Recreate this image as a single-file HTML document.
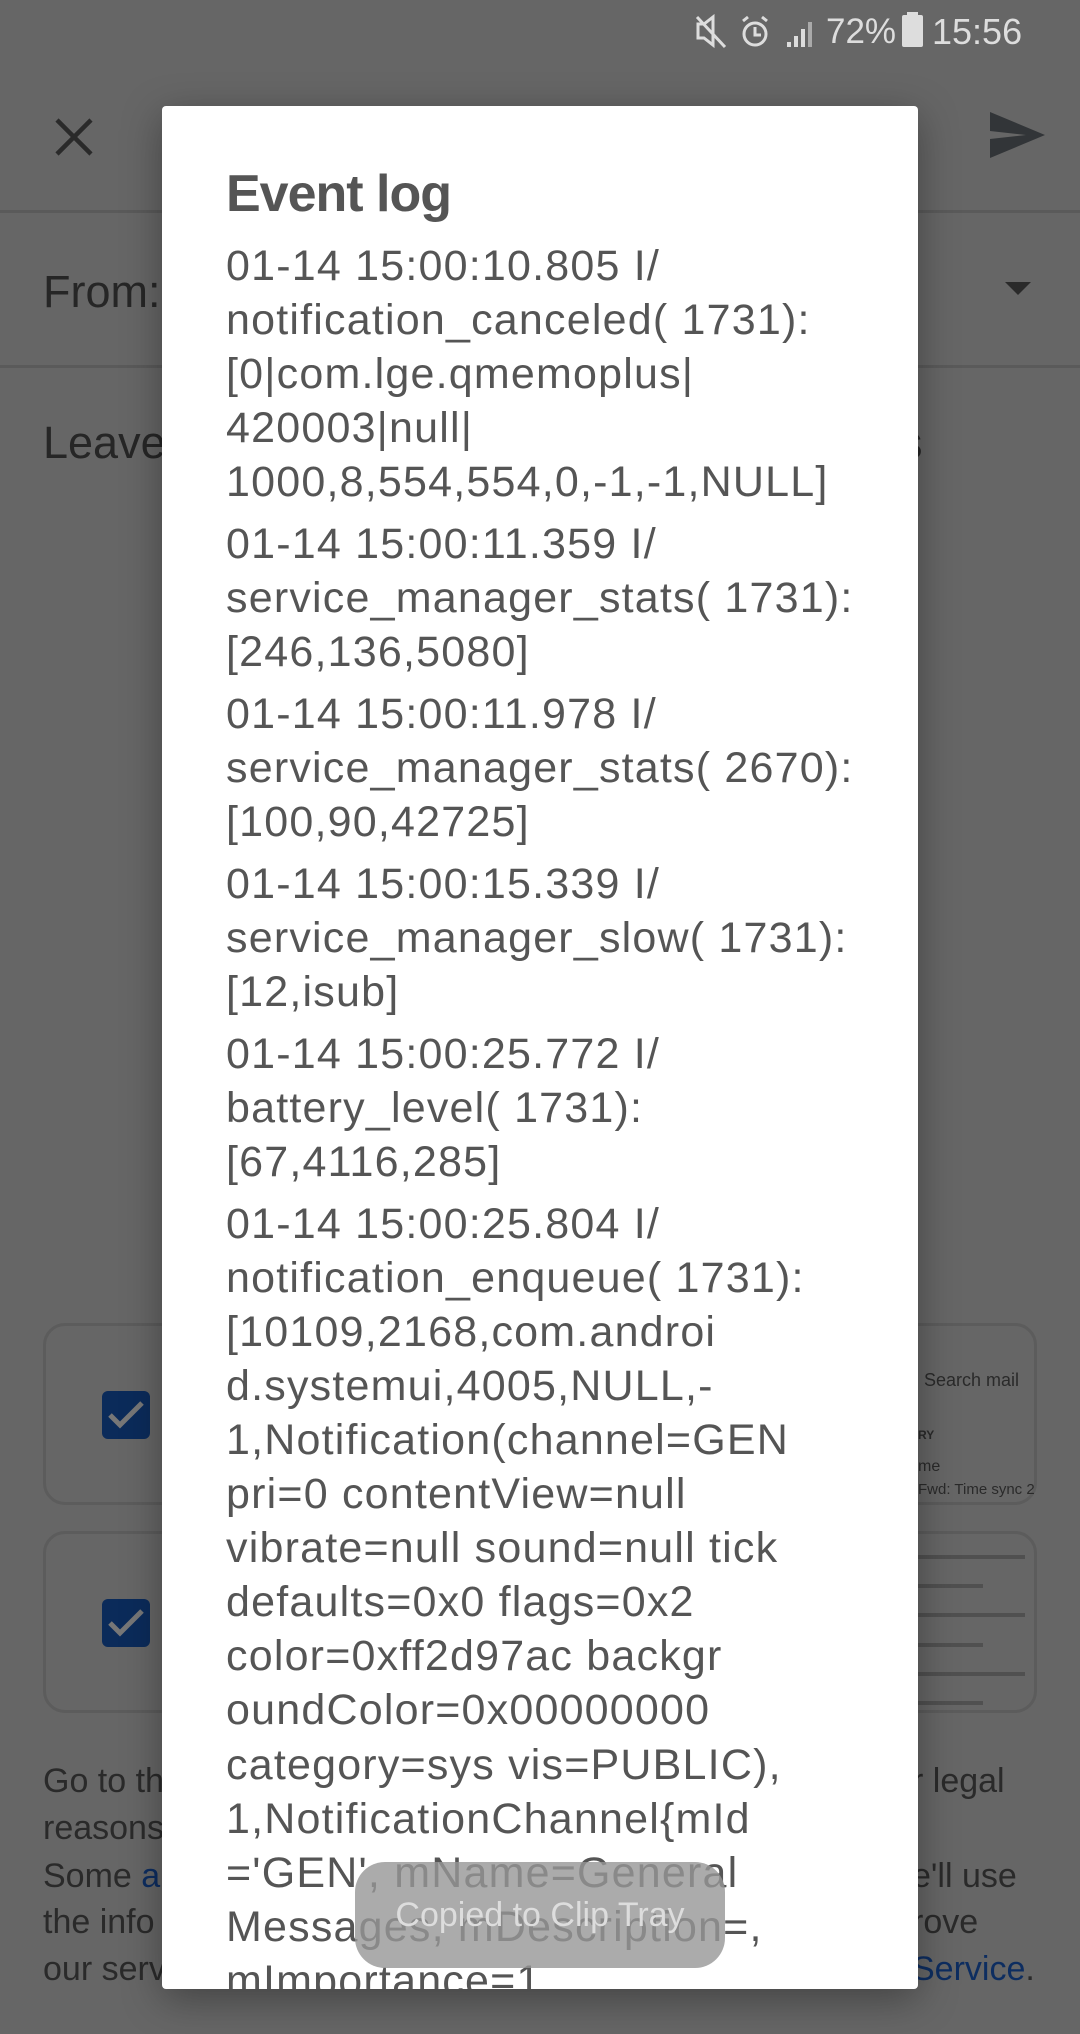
<!DOCTYPE html>
<html><head><meta charset="utf-8"><style>
*{margin:0;padding:0;box-sizing:border-box}
body{width:1080px;height:2034px;background:#666;position:relative;overflow:hidden;font-family:"Liberation Sans",sans-serif}
.abs{position:absolute}
.dark{color:#262626}
.line{position:absolute;left:0;right:0;height:3px;background:#5a5a5a}
.card{position:absolute;left:43px;width:994px;border:3px solid #5c5c5c;border-radius:22px}
.cb{position:absolute;left:102px;width:48px;height:48px;background:#0b2b5a;border-radius:6px}
.bt{position:absolute;left:43px;font-size:34px;color:#2a2a2a;white-space:nowrap}
#dlg{position:absolute;left:162px;top:106px;width:756px;height:1883px;background:#fff;border-radius:4px;overflow:hidden;box-shadow:0 10px 40px rgba(0,0,0,.35)}
#dlg h1{position:absolute;left:64px;top:58px;font-size:52px;font-weight:bold;color:#555;letter-spacing:-1px}
#log{position:absolute;left:64px;top:133px;color:#555;font-size:43px;letter-spacing:1.2px;line-height:54.1px;white-space:nowrap}
#log .e{margin-bottom:7.6px}
#toast{position:absolute;left:355px;top:1862px;width:370px;height:106px;border-radius:30px;background:rgba(150,150,150,.8);color:#ddd;font-size:34px;text-align:center;line-height:106px}
</style></head><body>
<svg class="abs" style="left:695px;top:14px" width="240" height="36" viewBox="0 0 240 36">
<g fill="none" stroke="#ddd" stroke-width="3">
<path d="M3 10h6l9-7v28l-9-7H3z"/><path d="M2 3l28 30"/>
<circle cx="60" cy="20" r="11"/><path d="M60 13v8h6"/><path d="M48 7l5-4M72 7l-5-4"/>
</g>
<g fill="#ddd"><rect x="92" y="28" width="4" height="5"/><rect x="99" y="22" width="4" height="11"/><rect x="106" y="15" width="4" height="18"/><rect x="113" y="8" width="4" height="25" fill="#aaa"/></g>
</svg>
<div class="abs" style="left:826px;top:12px;font-size:35px;color:#ddd">72%</div>
<div class="abs" style="left:902px;top:15px;width:21px;height:32px;background:#ddd;border-radius:2px"></div>
<div class="abs" style="left:907px;top:12px;width:11px;height:4px;background:#ddd"></div>
<div class="abs" style="left:932px;top:11px;font-size:36px;color:#ddd">15:56</div>
<svg class="abs" style="left:52px;top:115px" width="44" height="44" viewBox="0 0 44 44"><path d="M5 5l34 34M39 5L5 39" stroke="#2a2a2a" stroke-width="4.5"/></svg>
<svg class="abs" style="left:988px;top:110px" width="60" height="50" viewBox="0 0 60 50"><path d="M2 2L57 25 2 48V29L38 25 2 21z" fill="#323538"/></svg>
<div class="line" style="top:210px"></div>
<div class="abs dark" style="left:43px;top:266px;font-size:45px">From:</div>
<svg class="abs" style="left:1005px;top:280px" width="26" height="16"><path d="M0 2h26L13 15z" fill="#2a2a2a"/></svg>
<div class="line" style="top:365px"></div>
<div class="abs dark" style="left:43px;top:417px;font-size:45px">Leave</div>
<div class="abs dark" style="left:900px;top:417px;font-size:45px">s</div>
<div class="card" style="top:1323px;height:182px"></div>
<div class="card" style="top:1531px;height:182px"></div>
<div class="cb" style="top:1391px"></div><svg class="abs" style="left:106px;top:1399px" width="40" height="32"><path d="M4 16l10 10L36 4" stroke="#777" stroke-width="5" fill="none"/></svg>
<div class="cb" style="top:1599px"></div><svg class="abs" style="left:106px;top:1607px" width="40" height="32"><path d="M4 16l10 10L36 4" stroke="#777" stroke-width="5" fill="none"/></svg>
<div class="abs" style="left:924px;top:1370px;font-size:18px;color:#2a2a2a">Search mail</div>
<div class="abs" style="left:918px;top:1428px;font-size:12px;color:#2a2a2a;font-weight:bold">RY</div>
<div class="abs" style="left:918px;top:1458px;font-size:16px;color:#2a2a2a">me</div>
<div class="abs" style="left:918px;top:1481px;font-size:15px;color:#2a2a2a">Fwd: Time sync 2</div>
<div class="abs" style="left:918px;top:1555px;width:107px;height:4px;background:#505050"></div>
<div class="abs" style="left:918px;top:1584px;width:65px;height:4px;background:#505050"></div>
<div class="abs" style="left:918px;top:1613px;width:107px;height:4px;background:#505050"></div>
<div class="abs" style="left:918px;top:1643px;width:65px;height:4px;background:#505050"></div>
<div class="abs" style="left:918px;top:1672px;width:107px;height:4px;background:#505050"></div>
<div class="abs" style="left:918px;top:1701px;width:65px;height:4px;background:#505050"></div>
<div class="bt" style="top:1762px">Go to th</div>
<div class="bt" style="top:1809px">reasons</div>
<div class="bt" style="top:1857px">Some <span style="color:#0d2d60">a</span></div>
<div class="bt" style="top:1903px">the info</div>
<div class="bt" style="top:1950px">our serv</div>
<div class="bt" style="left:912px;top:1762px">r legal</div>
<div class="bt" style="left:912px;top:1857px">e'll use</div>
<div class="bt" style="left:912px;top:1903px">rove</div>
<div class="bt" style="left:912px;top:1950px"><span style="color:#0d2d60">Service</span>.</div>
<div id="dlg">
<h1>Event log</h1>
<div id="log">
<div class="e">01-14 15:00:10.805 I/<br>notification_canceled( 1731):<br>[0|com.lge.qmemoplus|<br>420003|null|<br>1000,8,554,554,0,-1,-1,NULL]</div>
<div class="e">01-14 15:00:11.359 I/<br>service_manager_stats( 1731):<br>[246,136,5080]</div>
<div class="e">01-14 15:00:11.978 I/<br>service_manager_stats( 2670):<br>[100,90,42725]</div>
<div class="e">01-14 15:00:15.339 I/<br>service_manager_slow( 1731):<br>[12,isub]</div>
<div class="e">01-14 15:00:25.772 I/<br>battery_level( 1731):<br>[67,4116,285]</div>
<div class="e">01-14 15:00:25.804 I/<br>notification_enqueue( 1731):<br>[10109,2168,com.androi<br>d.systemui,4005,NULL,-<br>1,Notification(channel=GEN<br>pri=0 contentView=null<br>vibrate=null sound=null tick<br>defaults=0x0 flags=0x2<br>color=0xff2d97ac backgr<br>oundColor=0x00000000<br>category=sys vis=PUBLIC),<br>1,NotificationChannel{mId<br>='GEN', mName=General<br>Messages, mDescription=,<br>mImportance=1,</div>
</div>
</div>
<div id="toast">Copied to Clip Tray</div>
</body></html>
